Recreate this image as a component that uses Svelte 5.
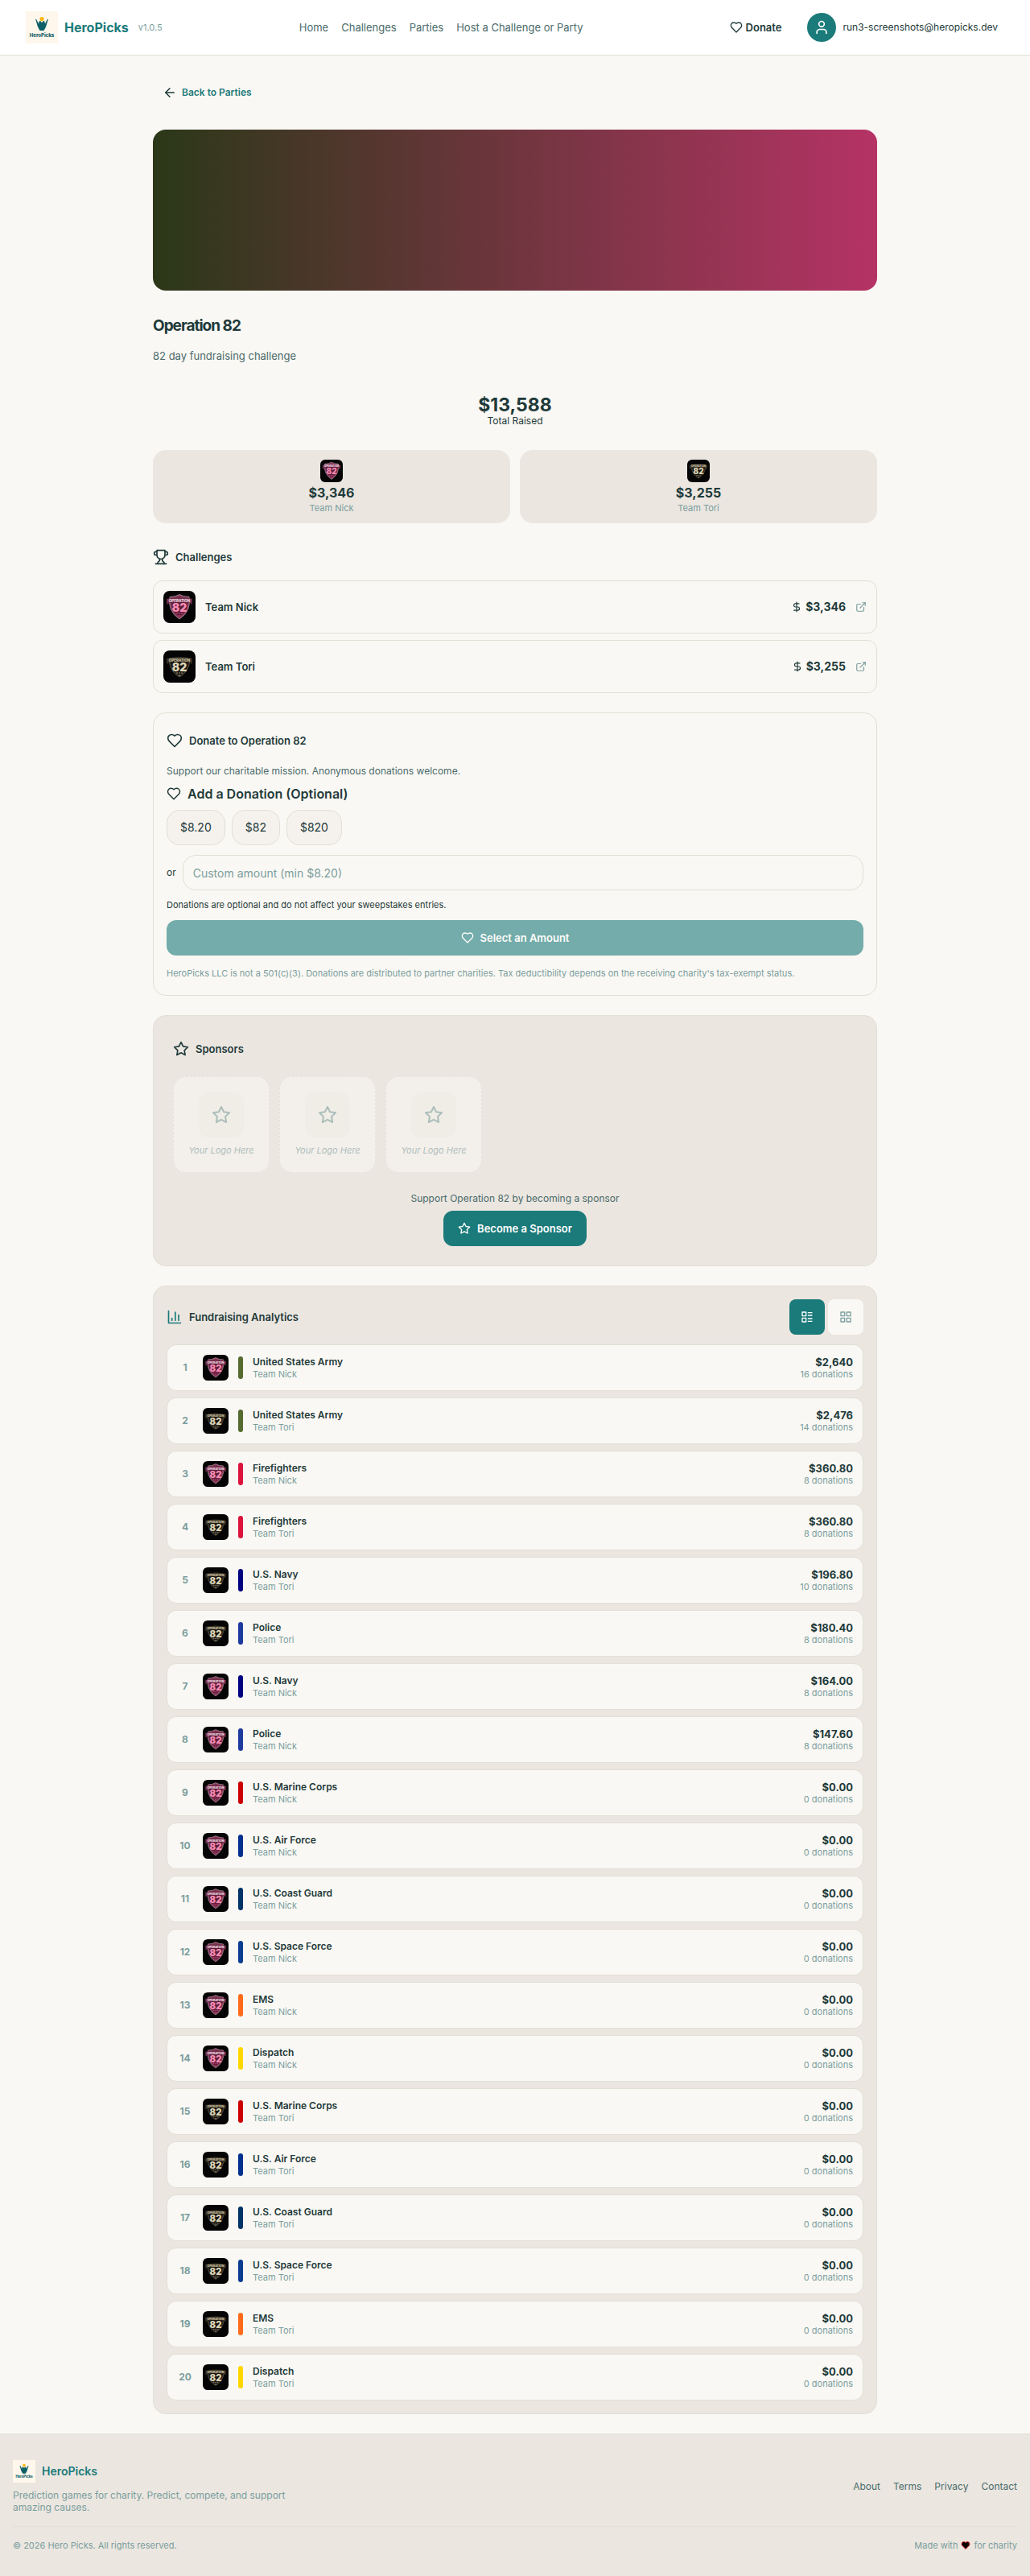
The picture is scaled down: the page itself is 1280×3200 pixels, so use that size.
<script lang="ts">
    type Team = "Nick" | "Tori";

    const navLinks = ["Home", "Challenges", "Parties", "Host a Challenge or Party"];
    const footerLinks = ["About", "Terms", "Privacy", "Contact"];
    const presets = ["$8.20", "$82", "$820"];

    const teams: { team: Team; raised: string }[] = [
        { team: "Nick", raised: "$3,346" },
        { team: "Tori", raised: "$3,255" },
    ];

    const colors = {
        "United States Army": "#556b2f",
        Firefighters: "#dc143c",
        "U.S. Navy": "#000080",
        Police: "#1e3a9f",
        "U.S. Marine Corps": "#cc0000",
        "U.S. Air Force": "#00308f",
        "U.S. Coast Guard": "#003366",
        "U.S. Space Force": "#0b3d91",
        EMS: "#ff6b1a",
        Dispatch: "#ffd700",
    };

    const rows: [string, Team, string, number][] = [
        ["United States Army", "Nick", "$2,640", 16],
        ["United States Army", "Tori", "$2,476", 14],
        ["Firefighters", "Nick", "$360.80", 8],
        ["Firefighters", "Tori", "$360.80", 8],
        ["U.S. Navy", "Tori", "$196.80", 10],
        ["Police", "Tori", "$180.40", 8],
        ["U.S. Navy", "Nick", "$164.00", 8],
        ["Police", "Nick", "$147.60", 8],
        ["U.S. Marine Corps", "Nick", "$0.00", 0],
        ["U.S. Air Force", "Nick", "$0.00", 0],
        ["U.S. Coast Guard", "Nick", "$0.00", 0],
        ["U.S. Space Force", "Nick", "$0.00", 0],
        ["EMS", "Nick", "$0.00", 0],
        ["Dispatch", "Nick", "$0.00", 0],
        ["U.S. Marine Corps", "Tori", "$0.00", 0],
        ["U.S. Air Force", "Tori", "$0.00", 0],
        ["U.S. Coast Guard", "Tori", "$0.00", 0],
        ["U.S. Space Force", "Tori", "$0.00", 0],
        ["EMS", "Tori", "$0.00", 0],
        ["Dispatch", "Tori", "$0.00", 0],
    ];

    const icons = {
        heart: ["M19 14c1.49-1.46 3-3.21 3-5.5A5.5 5.5 0 0 0 16.5 3c-1.76 0-3 .5-4.5 2-1.5-1.5-2.74-2-4.5-2A5.5 5.5 0 0 0 2 8.5c0 2.3 1.5 4.05 3 5.5l7 7Z"],
        star: ["M12 2l3.09 6.26L22 9.27l-5 4.87 1.18 6.88L12 17.77l-6.18 3.25L7 14.14 2 9.27l6.91-1.01L12 2z"],
        user: ["M19 21v-2a4 4 0 0 0-4-4H9a4 4 0 0 0-4 4v2", "M12 3a4 4 0 1 0 0 8 4 4 0 0 0 0-8z"],
        back: ["M12 19l-7-7 7-7", "M19 12H5"],
        trophy: [
            "M6 9H4.5a2.5 2.5 0 0 1 0-5H6",
            "M18 9h1.5a2.5 2.5 0 0 0 0-5H18",
            "M4 22h16",
            "M10 14.66V17c0 .55-.47.98-.97 1.21C7.85 18.75 7 20.24 7 22",
            "M14 14.66V17c0 .55.47.98.97 1.21C16.15 18.75 17 20.24 17 22",
            "M18 2H6v7a6 6 0 0 0 12 0V2Z",
        ],
        dollar: ["M12 2v20", "M17 5H9.5a3.5 3.5 0 0 0 0 7h5a3.5 3.5 0 0 1 0 7H6"],
        external: ["M15 3h6v6", "M10 14L21 3", "M18 13v6a2 2 0 0 1-2 2H5a2 2 0 0 1-2-2V8a2 2 0 0 1 2-2h6"],
        chart: ["M3 3v18h18", "M18 17V9", "M13 17V5", "M8 17v-3"],
        list: ["M3 3h7v7H3z", "M3 14h7v7H3z", "M14 4h7", "M14 9h7", "M14 15h7", "M14 20h7"],
        grid: ["M3 3h7v7H3z", "M14 3h7v7h-7z", "M14 14h7v7h-7z", "M3 14h7v7H3z"],
    };

    let amount = $state("");
    let view = $state("list");
</script>

{#snippet icon(name: keyof typeof icons, size: number)}
    <svg class="icon" width={size} height={size} viewBox="0 0 24 24" aria-hidden="true">
        {#each icons[name] as d}
            <path {d} />
        {/each}
    </svg>
{/snippet}

{#snippet logo(size: number)}
    <svg class="logo" width={size} height={size} viewBox="0 0 40 40" role="img" aria-label="HeroPicks logo">
        <rect width="40" height="40" fill="#fff7ec" />
        <path d="M12 9.5l1.5 1 2.5 5 .5-2.5a1.6 1.6 0 0 1 3 1h1a1.6 1.6 0 0 1 3-1l.5 2.5 2.500-5 1.500-1-3 10-2.500 4.500h-5l-2.500-4.500z" fill="#0e6068" />
        <circle cx="20" cy="9.5" r="2.6" fill="#fbb813" />
        <text x="20" y="31.5" text-anchor="middle" font-size="6" font-weight="800" fill="#0e6068">HeroPicks</text>
    </svg>
{/snippet}

{#snippet badge(team: Team, size: number)}
    <svg class="badge {team.toLowerCase()}" class:small={size < 40} width={size} height={size} viewBox="0 0 40 40" role="img" aria-label="Team {team}">
        <rect width="40" height="40" fill="#050505" />
        {#if team === "Nick"}
            <path class="shield" d="M20 4.5Q25 7.5 32 7.5Q35 25 20 35Q5 25 8 7.5Q15 7.5 20 4.5z" />
            <path class="inner" d="M20 7q5 2 10 2q2 15-10 23.5q-12-8.5-10-23.5q5 0 10-2z" />
            <path class="ribbon" d="M4 10q16-5 32 0l-.5 7-2.5-2q-13-4-26 0l-2.5 2z" />
        {:else}
            <path class="shield" d="M7 13h26q-2 14-13 20q-11-6-13-20z" />
            <path class="inner" d="M9 14h22q-2 11-11 17q-9-6-11-17z" />
            <path class="ribbon" d="M4 10q16-4 32 0l-.5 7-2.5-2q-13-3-26 0l-2.5 2z" />
        {/if}
        <text class="op" x="20" y="13.5" text-anchor="middle" font-size="4.5">OPERATION</text>
        <text class="num" x="20" y="26" text-anchor="middle" font-size="14">82</text>
        <path class="dots" d="M16 28h2M19 28h2M22 28h2M18.5 31h3" />
    </svg>
{/snippet}

<div class="page">
    <header class="topbar">
        <div class="brand">
            {@render logo(40)}
            <a class="brand-name" href="#home">HeroPicks</a>
            <span class="version">v1.0.5</span>
        </div>
        <nav class="nav">
            {#each navLinks as link}
                <a href="#{link}">{link}</a>
            {/each}
        </nav>
        <div class="account">
            <a class="donate-link" href="#donate">{@render icon("heart", 16)}Donate</a>
            <a class="user" href="#account">
                <span class="avatar">{@render icon("user", 20)}</span>
                run3-screenshots@heropicks.dev
            </a>
        </div>
    </header>

    <main>
        <a class="back" href="#parties">{@render icon("back", 18)}<span>Back to Parties</span></a>
        <div class="banner"></div>
        <h1>Operation 82</h1>
        <p class="subtitle">82 day fundraising challenge</p>

        <div class="total">
            <strong>$13,588</strong>
            <span>Total Raised</span>
        </div>

        <div class="team-cards">
            {#each teams as t}
                <div class="team-card">
                    {@render badge(t.team, 28)}
                    <strong>{t.raised}</strong>
                    <span>Team {t.team}</span>
                </div>
            {/each}
        </div>

        <h2 class="challenges-title">{@render icon("trophy", 20)}Challenges</h2>
        <div class="challenges">
            {#each teams as t}
                <a class="challenge" href="#team-{t.team}">
                    {@render badge(t.team, 40)}
                    <span class="challenge-name">Team {t.team}</span>
                    <span class="challenge-raised">{@render icon("dollar", 14)}{t.raised}</span>
                    <span class="faint">{@render icon("external", 14)}</span>
                </a>
            {/each}
        </div>

        <section class="card donate">
            <h2>{@render icon("heart", 20)}Donate to Operation 82</h2>
            <p class="lead">Support our charitable mission. Anonymous donations welcome.</p>
            <h3>{@render icon("heart", 18)}Add a Donation (Optional)</h3>
            <div class="presets">
                {#each presets as preset}
                    <button type="button" onclick={() => (amount = preset.slice(1))}>{preset}</button>
                {/each}
            </div>
            <div class="custom">
                <label for="custom-amount">or</label>
                <input id="custom-amount" type="text" placeholder="Custom amount (min $8.20)" bind:value={amount} />
            </div>
            <p class="note">Donations are optional and do not affect your sweepstakes entries.</p>
            <button class="primary wide" type="button" disabled={!amount}>{@render icon("heart", 16)}Select an Amount</button>
            <p class="legal">
                HeroPicks LLC is not a 501(c)(3). Donations are distributed to partner charities. Tax deductibility depends on the receiving charity's tax-exempt status.
            </p>
        </section>

        <section class="card sponsors">
            <h2>{@render icon("star", 20)}Sponsors</h2>
            <div class="tiles">
                {#each [1, 2, 3] as n (n)}
                    <div class="tile">
                        <div class="tile-icon">{@render icon("star", 24)}</div>
                        <em>Your Logo Here</em>
                    </div>
                {/each}
            </div>
            <p class="pitch">Support Operation 82 by becoming a sponsor</p>
            <button class="primary" type="button">{@render icon("star", 16)}Become a Sponsor</button>
        </section>

        <section class="card analytics">
            <div class="analytics-head">
                <h2>{@render icon("chart", 20)}Fundraising Analytics</h2>
                <div class="toggle">
                    <button type="button" aria-label="List view" class:active={view === "list"} onclick={() => (view = "list")}>{@render icon("list", 16)}</button>
                    <button type="button" aria-label="Grid view" class:active={view === "grid"} onclick={() => (view = "grid")}>{@render icon("grid", 16)}</button>
                </div>
            </div>
            <ol>
                {#each rows as [name, team, raised, count], index}
                    <li>
                        <span class="rank">{index + 1}</span>
                        {@render badge(team, 32)}
                        <span class="bar" style="background: {colors[name]}"></span>
                        <div class="who">
                            <strong>{name}</strong>
                            <span>Team {team}</span>
                        </div>
                        <div class="sum">
                            <strong>{raised}</strong>
                            <span>{count} donations</span>
                        </div>
                    </li>
                {/each}
            </ol>
        </section>
    </main>

    <footer>
        <div class="footer-top">
            <div class="about">
                <div class="footer-brand">{@render logo(28)}<span>HeroPicks</span></div>
                <p>Prediction games for charity. Predict, compete, and support amazing causes.</p>
            </div>
            <nav>
                {#each footerLinks as link}
                    <a href="#{link}">{link}</a>
                {/each}
            </nav>
        </div>
        <div class="footer-bottom">
            <span>© 2026 Hero Picks. All rights reserved.</span>
            <span class="made">
                Made with
                <svg width="12" height="12" viewBox="0 0 24 24" aria-label="love"><path d={icons.heart[0]} fill="#000" stroke="#d22" stroke-width="2" /></svg>
                for charity
            </span>
        </div>
    </footer>
</div>

<style>
    :global(body) {
        background: #faf8f4;
    }
    .page {
        --ink: #1e3a3a;
        --muted: #4a6b6b;
        --faint: #7a9e9e;
        --teal: #1b7a7a;
        --sand: #ebe6e0;
        --paper: #faf8f4;
        --line: #e2dfd6;
        color: var(--ink);
        font-family: Inter, "Liberation Sans", sans-serif;
        font-size: 12px;
        line-height: 16px;
    }
    h1,
    h2,
    h3,
    p,
    ol {
        margin: 0;
        padding: 0;
    }
    a {
        color: inherit;
        text-decoration: none;
    }
    button,
    input {
        font: inherit;
        color: inherit;
        box-sizing: border-box;
    }
    svg {
        display: block;
        flex: none;
    }
    svg text {
        font-family: Inter, sans-serif;
    }
    .icon {
        fill: none;
        stroke: currentColor;
        stroke-width: 2;
        stroke-linecap: round;
        stroke-linejoin: round;
    }

    /* badges */
    .badge {
        border-radius: 8px;
    }
    .badge.small {
        border-radius: 6px;
    }
    .shield {
        fill: #8c3a5c;
        stroke: #9a8088;
        stroke-width: 1;
    }
    .inner {
        fill: #5c1f3a;
    }
    .ribbon {
        fill: #74304d;
    }
    .op {
        fill: #f3dbe4;
        font-weight: 800;
    }
    .num {
        fill: #f78ab2;
        font-weight: 900;
    }
    .dots {
        fill: none;
        stroke: #d8497f;
        stroke-width: 1;
    }
    .tori .shield {
        fill: #2a2620;
        stroke: #5c5444;
    }
    .tori .inner {
        fill: #161410;
    }
    .tori .ribbon {
        fill: #3b3528;
    }
    .tori .op {
        fill: #c9bf9e;
    }
    .tori .num {
        fill: #ddd3b4;
    }
    .tori .dots {
        stroke: #a3977a;
    }

    .topbar {
        display: flex;
        align-items: center;
        justify-content: space-between;
        padding: 14px 40px 14px 32px;
        background: #fff;
        border-bottom: 1px solid var(--line);
    }
    .brand {
        display: flex;
        align-items: center;
        gap: 8px;
    }
    .brand-name {
        color: var(--teal);
        font-size: 16px;
        font-weight: 700;
    }
    .version {
        margin-left: 4px;
        color: var(--faint);
        font-size: 11px;
    }
    .nav {
        display: flex;
        gap: 16px;
        margin-right: 12px;
        color: var(--muted);
        font-size: 13px;
    }
    .account {
        display: flex;
        align-items: center;
        gap: 32px;
    }
    .donate-link {
        display: flex;
        align-items: center;
        gap: 4px;
        font-size: 13px;
        font-weight: 600;
    }
    .user {
        display: flex;
        align-items: center;
        gap: 8px;
    }
    .avatar {
        display: grid;
        place-items: center;
        width: 36px;
        height: 36px;
        border-radius: 50%;
        background: var(--teal);
        color: #fff;
    }

    main {
        max-width: 900px;
        margin: 0 auto;
        padding: 24px 16px;
    }
    .back {
        display: inline-flex;
        align-items: center;
        gap: 6px;
        height: 44px;
        padding: 0 12px;
        font-weight: 600;
    }
    .back span {
        color: var(--teal);
    }
    .banner {
        height: 200px;
        margin-top: 24px;
        border-radius: 16px;
        background: linear-gradient(90deg, #2b3818, #b53365);
    }
    h1 {
        margin-top: 32px;
        font-size: 19px;
        line-height: 24px;
        letter-spacing: -1px;
    }
    .subtitle {
        margin-top: 16px;
        color: var(--muted);
        font-size: 13px;
        line-height: 18px;
    }
    .total {
        display: flex;
        flex-direction: column;
        align-items: center;
        margin-top: 40px;
    }
    .total strong {
        font-size: 23px;
        line-height: 24px;
    }
    .team-cards {
        display: grid;
        grid-template-columns: 1fr 1fr;
        gap: 12px;
        margin-top: 28px;
    }
    .team-card {
        display: flex;
        flex-direction: column;
        align-items: center;
        padding: 12px;
        border-radius: 16px;
        background: var(--sand);
    }
    .team-card strong {
        margin: 4px 0;
        font-size: 16px;
        line-height: 18px;
    }
    .team-card span {
        color: var(--faint);
        font-size: 11px;
        line-height: 13px;
    }
    h2 {
        display: flex;
        align-items: center;
        gap: 8px;
        font-size: 13px;
        font-weight: 600;
        line-height: 20px;
    }
    .challenges-title {
        margin: 32px 0 19px;
    }
    .challenges {
        display: grid;
        gap: 8px;
    }
    .challenge {
        display: flex;
        align-items: center;
        gap: 12px;
        padding: 12px;
        border: 1px solid var(--line);
        border-radius: 12px;
        font-size: 13px;
        font-weight: 600;
    }
    .challenge-raised {
        display: flex;
        align-items: center;
        gap: 4px;
        margin-left: auto;
        font-size: 14px;
        font-weight: 700;
    }
    .faint {
        color: var(--faint);
    }

    .card {
        margin-top: 24px;
        border: 1px solid var(--line);
        border-radius: 16px;
    }
    .donate {
        padding: 24px 16px 16px;
    }
    .lead {
        margin-top: 20px;
        color: var(--muted);
    }
    h3 {
        display: flex;
        align-items: center;
        gap: 8px;
        margin-top: 8px;
        font-size: 16px;
        font-weight: 600;
        line-height: 24px;
    }
    .presets {
        display: flex;
        gap: 8px;
        margin-top: 8px;
    }
    .presets button {
        height: 44px;
        padding: 0 16px;
        border: 1px solid var(--line);
        border-radius: 16px;
        background: #f5f1ed;
        font-size: 14px;
    }
    .custom {
        display: flex;
        align-items: center;
        gap: 8px;
        margin-top: 12px;
    }
    .custom input {
        flex: 1;
        min-width: 0;
        height: 44px;
        padding: 0 12px;
        border: 1px solid var(--line);
        border-radius: 16px;
        background: transparent;
        font-size: 14px;
    }
    .custom input::placeholder {
        color: var(--faint);
        opacity: 1;
    }
    .note {
        margin: 12px 0;
        font-size: 11px;
        line-height: 13px;
    }
    .primary {
        display: flex;
        align-items: center;
        justify-content: center;
        gap: 8px;
        height: 44px;
        padding: 0 18px;
        border: 0;
        border-radius: 12px;
        background: var(--teal);
        color: #fff;
        font-size: 13px;
        font-weight: 600;
    }
    .primary:disabled {
        opacity: 0.6;
    }
    .wide {
        width: 100%;
    }
    .legal {
        margin: 16px 0 4px;
        color: var(--faint);
        font-size: 11px;
        line-height: 13px;
    }

    .sponsors {
        display: flex;
        flex-direction: column;
        padding: 31px 24px 24px;
        background: var(--sand);
    }
    .tiles {
        display: flex;
        gap: 12px;
        margin-top: 24px;
    }
    .tile {
        display: flex;
        flex-direction: column;
        align-items: center;
        justify-content: center;
        gap: 8px;
        box-sizing: border-box;
        width: 120px;
        height: 120px;
        border: 1px dashed var(--line);
        border-radius: 16px;
        background: var(--paper);
        color: var(--faint);
        font-size: 11px;
        opacity: 0.55;
    }
    .tile-icon {
        display: grid;
        place-items: center;
        width: 56px;
        height: 56px;
        border-radius: 12px;
        background: #f4f4eb;
    }
    .pitch {
        margin: 24px 0 8px;
        color: var(--muted);
        line-height: 15px;
        text-align: center;
    }
    .sponsors .primary {
        align-self: center;
    }

    .analytics {
        padding: 16px;
        background: var(--sand);
    }
    .analytics-head {
        display: flex;
        align-items: center;
        justify-content: space-between;
    }
    .analytics-head .icon {
        color: var(--teal);
    }
    .toggle {
        display: flex;
        gap: 4px;
    }
    .toggle button {
        display: grid;
        place-items: center;
        width: 44px;
        height: 44px;
        padding: 0;
        border: 0;
        border-radius: 8px;
        background: var(--paper);
    }
    .toggle .icon {
        color: var(--faint);
    }
    .toggle .active {
        background: var(--teal);
    }
    .toggle .active .icon {
        color: #fff;
    }
    ol {
        display: grid;
        gap: 8px;
        margin-top: 12px;
        list-style: none;
    }
    li {
        display: flex;
        align-items: center;
        gap: 12px;
        padding: 12px;
        border: 1px solid var(--line);
        border-radius: 12px;
        background: var(--paper);
    }
    .rank {
        width: 20px;
        color: var(--faint);
        font-weight: 700;
        text-align: center;
    }
    .bar {
        width: 6px;
        height: 28px;
        border-radius: 3px;
    }
    .who,
    .sum {
        display: flex;
        flex-direction: column;
    }
    .who strong {
        font-weight: 600;
    }
    .who span,
    .sum span {
        color: var(--faint);
        font-size: 11px;
        line-height: 14px;
    }
    .sum {
        margin-left: auto;
        text-align: right;
    }
    .sum strong {
        font-size: 13px;
    }

    footer {
        padding: 32px 16px;
        background: var(--sand);
        border-top: 1px solid var(--line);
    }
    .footer-top {
        display: flex;
        align-items: center;
        justify-content: space-between;
        padding-bottom: 16px;
        border-bottom: 1px solid var(--line);
    }
    .about {
        max-width: 360px;
    }
    .about p {
        margin-top: 8px;
        color: var(--faint);
        line-height: 15px;
    }
    .footer-brand {
        display: flex;
        align-items: center;
        gap: 8px;
        color: var(--teal);
        font-size: 14px;
        font-weight: 600;
    }
    footer nav {
        display: flex;
        gap: 16px;
        color: var(--muted);
    }
    .footer-bottom {
        display: flex;
        justify-content: space-between;
        padding-top: 16px;
        color: var(--faint);
        font-size: 11px;
        line-height: 14px;
    }
    .made {
        display: flex;
        align-items: center;
        gap: 4px;
    }
</style>
